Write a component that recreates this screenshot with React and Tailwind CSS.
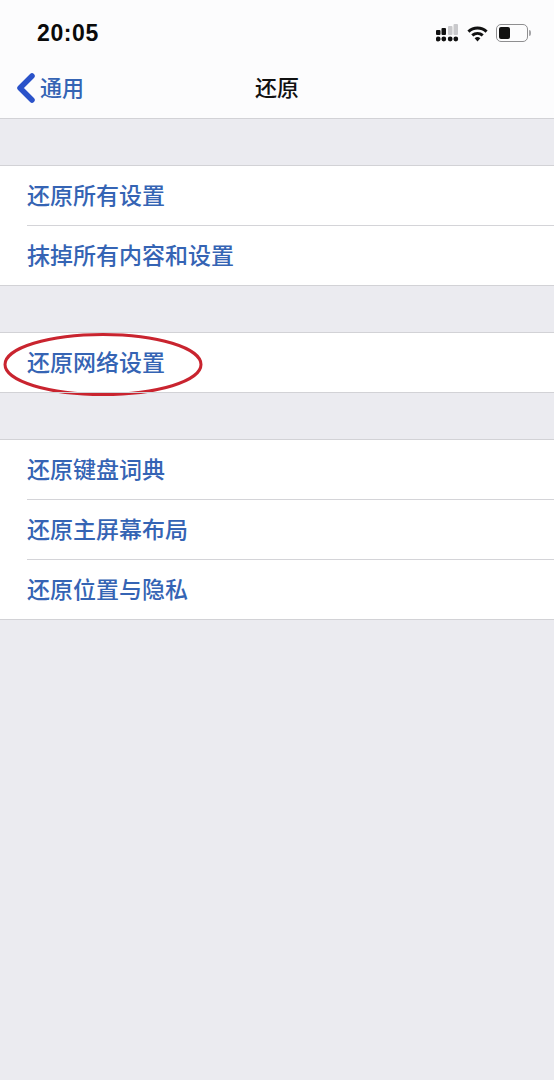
import React from 'react';

const font = { fontFamily: '"Noto Sans CJK SC", "Liberation Sans", sans-serif' };

const SignalIcon = () => (
  <svg width="23" height="18" viewBox="0 0 23 18" className="block">
    <rect x="0" y="6" width="4.5" height="5" rx="1" fill="#111" />
    <rect x="5.5" y="4" width="4.5" height="7" rx="1" fill="#111" />
    <rect x="12" y="2" width="4.5" height="9" rx="1" fill="#c9c9cc" />
    <rect x="17.5" y="0" width="4.5" height="11" rx="1" fill="#c9c9cc" />
    <circle cx="2.2" cy="15" r="2.4" fill="#111" />
    <circle cx="7.8" cy="15" r="2.4" fill="#111" />
    <circle cx="14.2" cy="15" r="2.4" fill="#111" />
    <circle cx="19.8" cy="15" r="2.4" fill="#111" />
  </svg>
);

const WifiIcon = () => (
  <svg width="21" height="17" viewBox="0 0 22 17" className="block">
    <path d="M1.5 6.5 A14 14 0 0 1 20.5 6.5" fill="none" stroke="#111" strokeWidth="3.2" />
    <path d="M5.5 10.5 A8.5 8.5 0 0 1 16.5 10.5" fill="none" stroke="#111" strokeWidth="3.2" />
    <path d="M8 13.5 L11 17 L14 13.5 A4.5 4.5 0 0 0 8 13.5 Z" fill="#111" />
  </svg>
);

const BatteryIcon = () => (
  <div className="flex items-center">
    <div className="w-[32px] h-[18px] rounded-[5px] border-[1.5px] border-[#8e8e90] p-[2px]">
      <div className="w-[11px] h-full rounded-[2px] bg-[#111]" />
    </div>
    <div className="ml-[1px] w-[2px] h-[6px] rounded-r bg-[#a5a5a8]" />
  </div>
);

const Row = ({ label, last, children }) => (
  <div className="relative h-[60px] flex items-center pl-[27px] pb-[3px] bg-white">
    <span className="text-[23px] leading-none font-medium text-[#3564b4]">{label}</span>
    {children}
    <div className={`absolute right-0 bottom-0 h-px ${last ? 'left-0 bg-[#d2d2d6]' : 'left-[27px] bg-[#d4d4d8]'}`} />
  </div>
);

const Group = ({ items, className, circled }) => (
  <div className={`border-t border-[#d2d2d6] bg-white ${className}`}>
    {items.map((item, i) => (
      <Row key={item} label={item} last={i === items.length - 1}>
        {circled && (
          <svg width="204" height="66" viewBox="0 0 204 66" className="absolute left-[3px] top-0">
            <ellipse cx="100" cy="31.5" rx="98" ry="30" fill="none" stroke="#c9242f" strokeWidth="3" />
          </svg>
        )}
      </Row>
    ))}
  </div>
);

export default function App() {
  return (
    <div className="w-[554px] h-[1080px] overflow-hidden bg-[#ebebf0]" style={font}>
      <div className="h-[119px] bg-[#fcfcfd] border-b border-[#d2d2d6]">
        <div className="h-[66px] flex items-center justify-between pl-[37px] pr-[23px]">
          <span className="text-[23px] font-bold tracking-[0.6px] text-[#0a0a0a]" style={{ fontFamily: '"Liberation Sans", sans-serif' }}>20:05</span>
          <div className="flex items-center gap-[8px]">
            <SignalIcon />
            <WifiIcon />
            <BatteryIcon />
          </div>
        </div>
        <div className="relative h-[44px] flex items-center justify-center pb-[4px]">
          <div className="absolute left-[15px] top-0 h-full flex items-center pb-[4px]">
            <svg width="21" height="32" viewBox="0 0 21 32" className="block mt-[3px]">
              <path d="M17 4 L5 16 L17 28" fill="none" stroke="#2a52c9" strokeWidth="5.5" strokeLinecap="round" strokeLinejoin="round" />
            </svg>
            <span className="ml-[4px] text-[22px] leading-none font-medium text-[#3564b4]">通用</span>
          </div>
          <span className="text-[22px] leading-none font-medium text-[#111]">还原</span>
        </div>
      </div>
      <Group className="mt-[46px]" items={['还原所有设置', '抹掉所有内容和设置']} />
      <Group className="mt-[46px]" items={['还原网络设置']} circled />
      <Group className="mt-[46px]" items={['还原键盘词典', '还原主屏幕布局', '还原位置与隐私']} />
    </div>
  );
}
